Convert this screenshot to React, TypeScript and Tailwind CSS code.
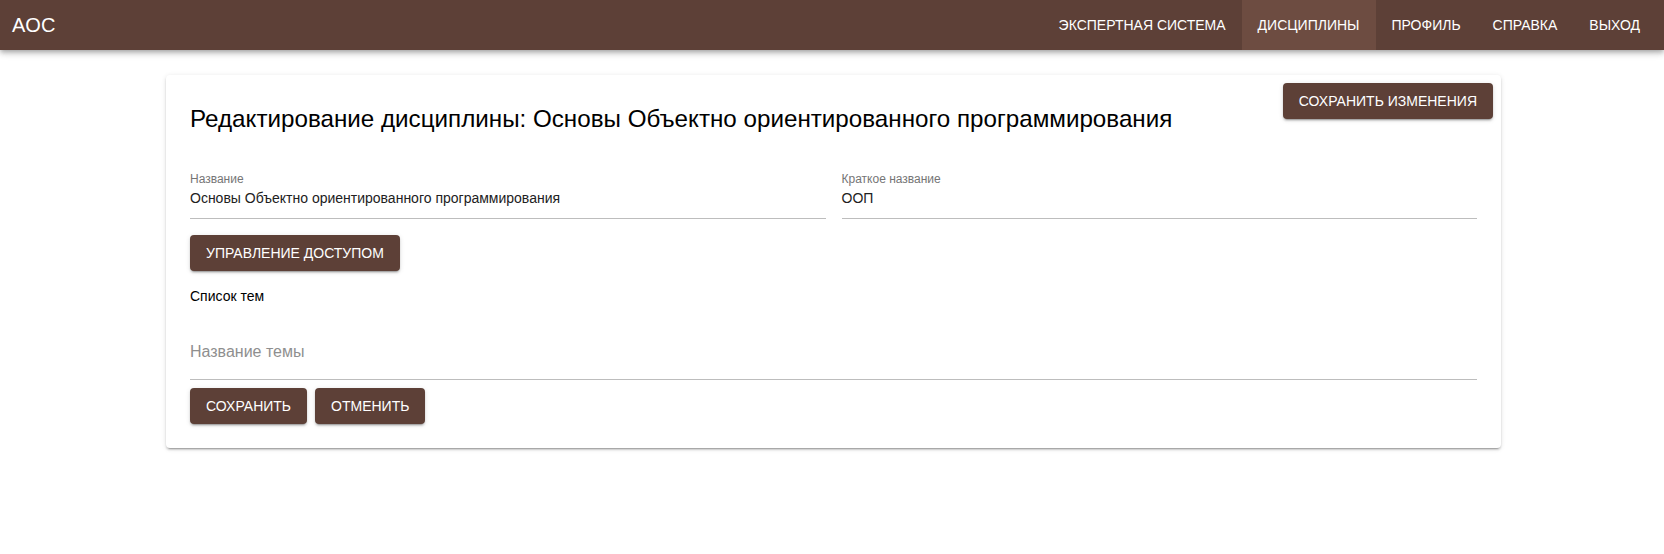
import { useState } from 'react';

const navItems = ['Экспертная система', 'Дисциплины', 'Профиль', 'Справка', 'Выход'];

const btn =
  'h-9 px-4 rounded bg-[#5d4037] text-white text-[14px] uppercase leading-none shadow-[0_3px_1px_-2px_rgba(0,0,0,0.2),0_2px_2px_0_rgba(0,0,0,0.14),0_1px_5px_0_rgba(0,0,0,0.12)] hover:bg-[#4e342e]';

function Field({ label, value }: { label: string; value: string }) {
  return (
    <div className="flex flex-col border-b border-[#bdbdbd] pb-[10px]">
      <span className="text-[12px] leading-[15px] text-[#757575]">{label}</span>
      <span className="mt-[2px] text-[14px] leading-[19px] text-[#212121]">{value}</span>
    </div>
  );
}

export default function App() {
  const [active] = useState('Дисциплины');
  const [topic, setTopic] = useState('');

  return (
    <div className="min-h-screen bg-white font-['Liberation_Sans',Arial,sans-serif]">
      {/* Header */}
      <header className="relative z-10 flex h-[50px] items-center justify-between bg-[#5d4037] pl-3 pr-2 text-white shadow-[0_2px_4px_-1px_rgba(0,0,0,0.2),0_4px_5px_0_rgba(0,0,0,0.14),0_1px_10px_0_rgba(0,0,0,0.12)]">
        <span className="text-[20px] leading-none">AOC</span>
        <nav className="flex h-full">
          {navItems.map((item) => (
            <a
              key={item}
              className={`flex h-full items-center px-4 text-[14px] uppercase ${
                item === active ? 'bg-[#6d4c41]' : ''
              }`}
            >
              {item}
            </a>
          ))}
        </nav>
      </header>

      {/* Card */}
      <div className="relative ml-[166px] mt-[25px] w-[1335px] rounded bg-white p-6 shadow-[0_3px_1px_-2px_rgba(0,0,0,0.2),0_2px_2px_0_rgba(0,0,0,0.14),0_1px_5px_0_rgba(0,0,0,0.12)]">
        <button className={`${btn} absolute right-2 top-2`}>Сохранить изменения</button>

        <h1 className="mt-1 text-[24.2px] leading-[32px] text-black">
          Редактирование дисциплины: Основы Объектно ориентированного программирования
        </h1>

        <div className="mt-[37px] grid grid-cols-2 gap-4">
          <Field label="Название" value="Основы Объектно ориентированного программирования" />
          <Field label="Краткое название" value="ООП" />
        </div>

        <button className={`${btn} mt-4`}>Управление доступом</button>

        <p className="mt-[15px] text-[14px] leading-5 text-black">Список тем</p>

        <div className="mt-[36px] border-b border-[#bdbdbd] pb-[18px]">
          <input
            value={topic}
            onChange={(e) => setTopic(e.target.value)}
            placeholder="Название темы"
            className="block h-[19px] w-full text-[16px] leading-[19px] text-[#212121] outline-none placeholder:text-[#8f8f8f]"
          />
        </div>

        <div className="mt-2 flex gap-2">
          <button className={btn}>Сохранить</button>
          <button className={btn}>Отменить</button>
        </div>
      </div>
    </div>
  );
}
